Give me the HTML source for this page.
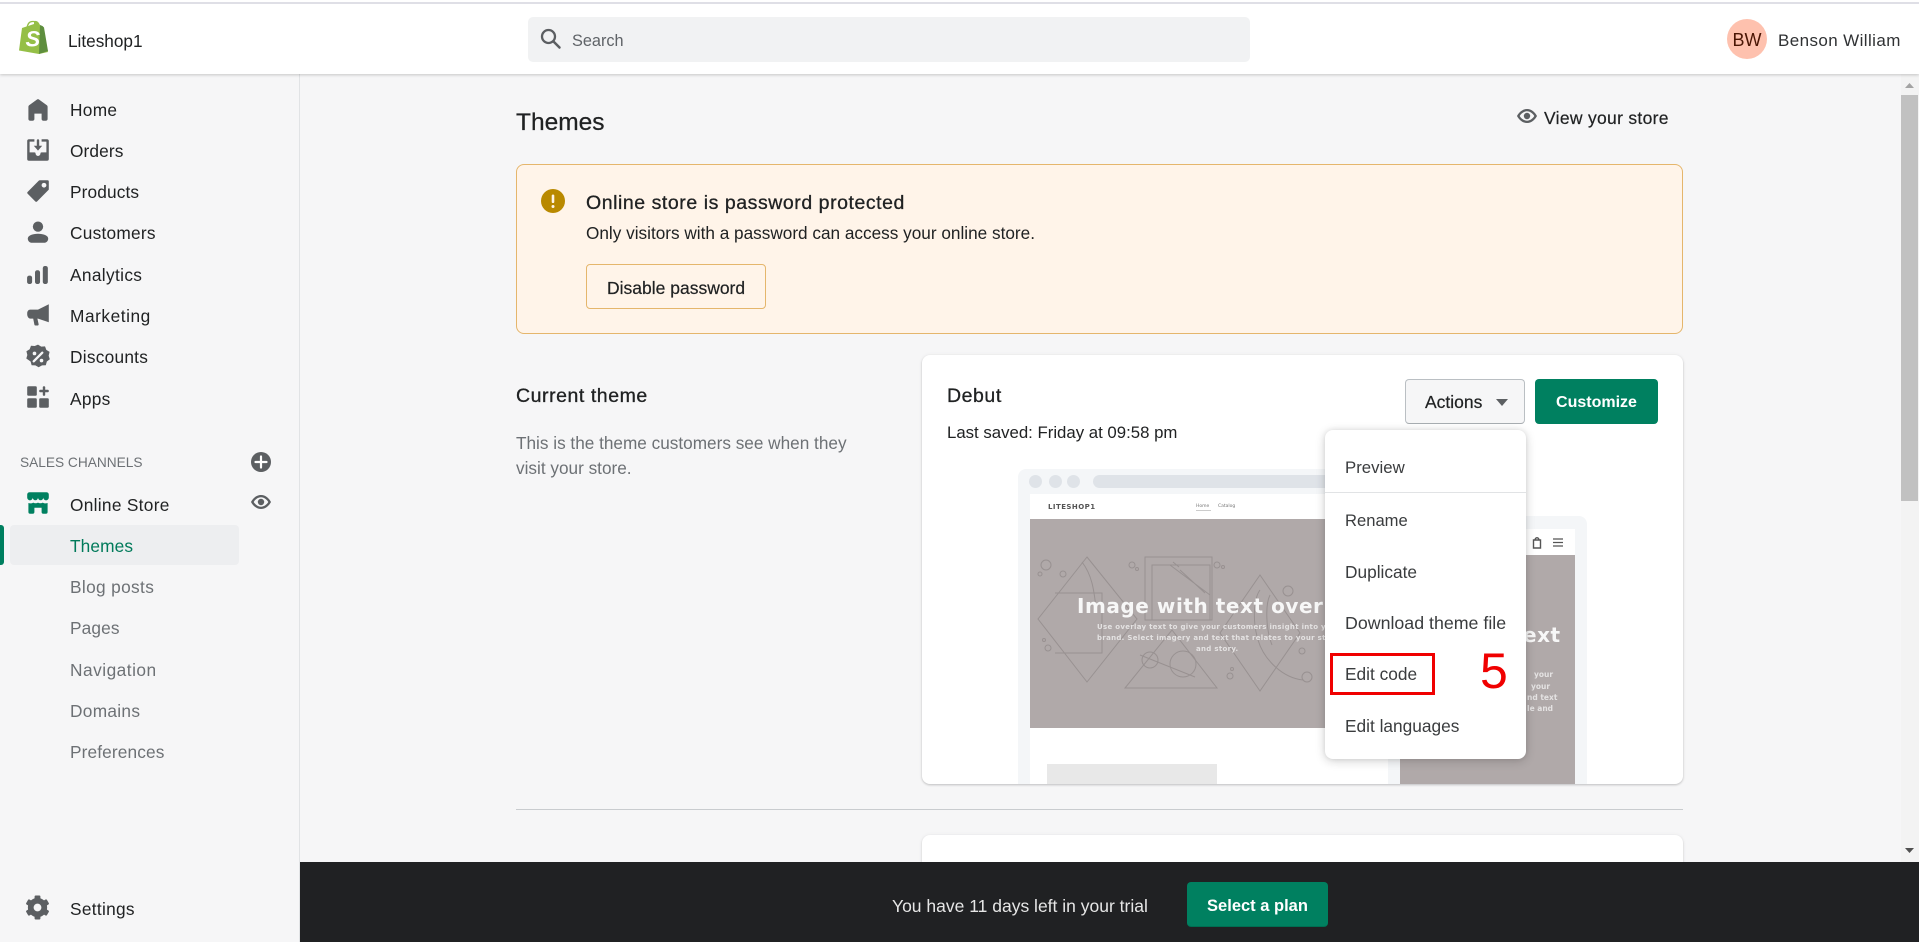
<!DOCTYPE html>
<html><head><meta charset="utf-8"><title>Themes</title>
<style>
*{box-sizing:border-box}
html,body{margin:0;padding:0;width:1919px;height:942px;overflow:hidden;background:#f6f6f7}
body{position:relative;font-family:"Liberation Sans",sans-serif;color:#202223;font-size:17px}
.a{position:absolute}
.t{position:absolute;white-space:nowrap;line-height:20px;transform:translateY(-50%)}
.g{color:#6d7175}
svg{position:absolute;display:block;overflow:visible}
.ic{fill:#5c5f62}
.m{font-size:17.3px;letter-spacing:.12px}
.h{font-size:19.5px;letter-spacing:.55px;-webkit-text-stroke:.3px #202223}
.b{font-size:17.5px;-webkit-text-stroke:.2px #202223}
.d{font-size:17.3px;color:#3a3c3e}
.dv{font-family:"DejaVu Sans",sans-serif;font-weight:700;color:#e4e2e2;line-height:10px}
</style></head><body>

<!-- top bar -->
<div class="a" style="left:0;top:0;width:1919px;height:74px;background:#fff;box-shadow:0 1px 3px rgba(0,0,0,.2);z-index:5">
<div class="a" style="left:0;top:2px;width:1919px;height:2px;background:#dfdfe6"></div>
<svg style="left:19px;top:20px" width="30" height="34" viewBox="0 0 30 34">
<path d="M3 8 L15 4 L15 1 Q19 0 21 5 L22 6 L29 32 L20 34 L0 30.500 Z" fill="#95bf47"/>
<path d="M21 5 L23.500 6 L25 7.500 L29 31 L20 34 Z" fill="#5e8e3e"/>
<path d="M8 8 Q9 1 14 1.500 Q18 1 18.500 8" fill="none" stroke="#95bf47" stroke-width="1.300"/>
<text x="6.500" y="26.500" font-family="Liberation Sans" font-weight="700" font-style="italic" font-size="22" fill="#fff">S</text>
</svg>
<div class="t" style="left:68px;top:41px;font-size:17.2px">Liteshop1</div>
<div class="a" style="left:528px;top:17px;width:722px;height:45px;background:#f1f2f3;border-radius:5px"></div>
<svg style="left:540px;top:28px" width="21" height="21" viewBox="0 0 21 21"><circle cx="8.500" cy="8.500" r="6.500" fill="none" stroke="#5c5f62" stroke-width="2.300"/><path d="M13.500 13.500L19.500 19.500" stroke="#5c5f62" stroke-width="2.500" stroke-linecap="round"/></svg>
<div class="t g" style="left:572px;top:41px;font-size:16.3px;color:#5f6367">Search</div>
<div class="a" style="left:1727px;top:19px;width:40px;height:40px;border-radius:50%;background:#fec1ae;color:#4a1504;font-size:18px;line-height:42px;text-align:center">BW</div>
<div class="t" style="left:1778px;top:41px;font-size:17px;letter-spacing:.4px;color:#303234">Benson William</div>
</div>

<!-- sidebar -->
<div class="a" style="left:299px;top:74px;width:1px;height:868px;background:#e1e3e5"></div>
<svg class="ic" style="left:26px;top:98px" width="24" height="24" viewBox="0 0 20 20"><path d="M18 7.261V17.500c0 .841-.672 1.500-1.500 1.500h-2c-.828 0-1.500-.659-1.500-1.500V13H7v4.477C7 18.318 6.328 19 5.500 19h-2c-.828 0-1.500-.682-1.500-1.523V7.261a1.500 1.500 0 0 1 .615-1.210l6.590-4.820a1.481 1.481 0 0 1 1.590 0l6.590 4.820A1.500 1.500 0 0 1 18 7.260z"/></svg>
<svg class="ic" style="left:25.500px;top:138px" width="24" height="24" viewBox="0 0 20 20"><path d="M2.500 1H7v2H3v9h4a1 1 0 0 1 1 1 2 2 0 0 0 4 0 1 1 0 0 1 1-1h4V3h-4V1h4.500A1.500 1.500 0 0 1 19 2.500v15a1.500 1.500 0 0 1-1.500 1.500h-15A1.500 1.500 0 0 1 1 17.500v-15A1.500 1.500 0 0 1 2.500 1z"/><path d="M10 1a1 1 0 0 1 1 1v4.500h2.500L10 10.500l-3.500-4H9V2a1 1 0 0 1 1-1z"/></svg>
<svg class="ic" style="left:25.500px;top:179px" width="24" height="24" viewBox="0 0 20 20"><path fill-rule="evenodd" d="M18 1h-6.500a1 1 0 0 0-.7.300L1.300 10.800a1 1 0 0 0 0 1.400l6.500 6.500a1 1 0 0 0 1.400 0l9.500-9.500a1 1 0 0 0 .3-.7V2a1 1 0 0 0-1-1zm-3 6.200a2 2 0 1 1 0-4 2 2 0 0 1 0 4z"/></svg>
<svg class="ic" style="left:26px;top:220px" width="24" height="24" viewBox="0 0 20 20"><circle cx="10" cy="5.500" r="4.300"/><path d="M10 11.500c-4.500 0-8.500 1.500-8.500 4 0 2 1.500 3.500 3.500 3.500h10c2 0 3.500-1.500 3.500-3.500 0-2.500-4-4-8.500-4z"/></svg>
<svg class="ic" style="left:26px;top:263px" width="24" height="24" viewBox="0 0 20 20"><rect x=".9" y="10.500" width="4.200" height="7" rx="1.800"/><rect x="7.500" y="6" width="4.200" height="11.500" rx="1.800"/><rect x="14" y="2.500" width="4.200" height="15" rx="1.800"/></svg>
<svg class="ic" style="left:25.500px;top:303px" width="24" height="24" viewBox="0 0 20 20"><path d="M19 1v15L10 13H9.500l1 4.500a1 1 0 0 1-1 1.300H8a1 1 0 0 1-1-.8L6 13H3.500C2 13 1 11 1 9.500V8.500C1 7 2 5.500 3.500 5.500H10L19 1z"/></svg>
<svg style="left:24.500px;top:344px" width="26" height="26" viewBox="0 0 20 20"><path class="ic" d="M10 .5l2.500 1.500 2.900-.2 1 2.700 2.500 1.600-.7 2.900.9 2.700-2.300 1.800-.8 2.800-2.900.1-2.600 1.500-2.500-1.500-2.900-.1-.8-2.800L1 11.200 1.800 8.500 1.100 5.600l2.500-1.600 1-2.700 2.900.2z"/><path d="M6.700 13.300l6.600-6.600" stroke="#f6f6f7" stroke-width="1.800" stroke-linecap="round"/><circle cx="7.300" cy="7.300" r="1.400" fill="#f6f6f7"/><circle cx="12.700" cy="12.700" r="1.400" fill="#f6f6f7"/></svg>
<svg class="ic" style="left:25.500px;top:385px" width="24" height="24" viewBox="0 0 20 20"><rect x="1" y="1" width="8" height="8" rx="1"/><rect x="1" y="11" width="8" height="8" rx="1"/><rect x="11" y="11" width="8" height="8" rx="1"/><rect x="14" y="1" width="2" height="8" rx=".8"/><rect x="11" y="4" width="8" height="2" rx=".8"/></svg>
<div class="t m" style="left:70px;top:110px;letter-spacing:.3px">Home</div>
<div class="t m" style="left:70px;top:151px">Orders</div>
<div class="t m" style="left:70px;top:192px">Products</div>
<div class="t m" style="left:70px;top:233px;letter-spacing:.25px">Customers</div>
<div class="t m" style="left:70px;top:275px;letter-spacing:.35px">Analytics</div>
<div class="t m" style="left:70px;top:316px;letter-spacing:.55px">Marketing</div>
<div class="t m" style="left:70px;top:357px;letter-spacing:.25px">Discounts</div>
<div class="t m" style="left:70px;top:399px;letter-spacing:.3px">Apps</div>
<div class="t" style="left:20px;top:463px;font-size:13.7px;color:#6d7175">SALES CHANNELS</div>
<svg style="left:251px;top:452px" width="20" height="20" viewBox="0 0 20 20"><circle cx="10" cy="10" r="10" fill="#5c5f62"/><path d="M10 4.500v11M4.500 10h11" stroke="#fff" stroke-width="2.200" stroke-linecap="round"/></svg>
<svg style="left:251px;top:492px" width="20" height="20" viewBox="0 0 20 20"><path class="ic" fill-rule="evenodd" d="M10 3C5 3 1.500 7 0 10c1.500 3 5 7 10 7s8.500-4 10-7c-1.500-3-5-7-10-7zm0 2.300c3 0 6 2.400 7.300 4.700-1.300 2.300-4.300 4.700-7.300 4.700S4 12.300 2.700 10C4 7.700 7 5.300 10 5.300z"/><circle cx="10" cy="10" r="3.200" fill="#5c5f62"/></svg>
<svg style="left:25.500px;top:491px" width="24" height="24" viewBox="0 0 20 20" fill="#008060"><path d="M3 1h14a2 2 0 0 1 2 2v2.500a2.300 2.300 0 0 1-4.600 0 2.200 2.200 0 0 1-4.400 0 2.200 2.200 0 0 1-4.400 0 2.300 2.300 0 0 1-4.600 0V3a2 2 0 0 1 2-2z" /><path d="M2 10c1.200.5 2.700.5 4-.300 1.200.7 2.800.7 4 0 1.200.7 2.800.7 4 0 1.300.8 2.800.8 4 .300v7.500a1.500 1.500 0 0 1-1.500 1.500h-2a1.500 1.500 0 0 1-1.500-1.500V14H7v3.500A1.500 1.500 0 0 1 5.500 19h-2A1.500 1.500 0 0 1 2 17.500z"/></svg>
<div class="t m" style="left:70px;top:505px;letter-spacing:.3px">Online Store</div>
<div class="a" style="left:0;top:525px;width:4px;height:40px;background:#008060;border-radius:0 3px 3px 0"></div>
<div class="a" style="left:10px;top:525px;width:229px;height:40px;background:#edeef0;border-radius:4px"></div>
<div class="t m" style="left:70px;top:546px;color:#007a5a">Themes</div>
<div class="t m g" style="left:70px;top:587px;letter-spacing:.35px">Blog posts</div>
<div class="t m g" style="left:70px;top:628px">Pages</div>
<div class="t m g" style="left:70px;top:670px;letter-spacing:.5px">Navigation</div>
<div class="t m g" style="left:70px;top:711px;letter-spacing:.3px">Domains</div>
<div class="t m g" style="left:70px;top:752px">Preferences</div>
<svg style="left:25px;top:895px" width="25" height="25" viewBox="0 0 24 24" fill="#5c5f62"><circle cx="12" cy="12" r="6.500" fill="none" stroke="#5c5f62" stroke-width="5.500"/><rect x="9.200" y=".5" width="5.600" height="5" rx="1"/><rect x="9.200" y=".5" width="5.600" height="5" rx="1" transform="rotate(60 12 12)"/><rect x="9.200" y=".5" width="5.600" height="5" rx="1" transform="rotate(120 12 12)"/><rect x="9.200" y=".5" width="5.600" height="5" rx="1" transform="rotate(180 12 12)"/><rect x="9.200" y=".5" width="5.600" height="5" rx="1" transform="rotate(240 12 12)"/><rect x="9.200" y=".5" width="5.600" height="5" rx="1" transform="rotate(300 12 12)"/></svg>
<div class="t m" style="left:70px;top:909px;letter-spacing:.3px">Settings</div>

<!-- main header -->
<div class="t" style="left:516px;top:122.500px;font-size:24.500px;-webkit-text-stroke:.25px #202223">Themes</div>
<svg style="left:1517px;top:106px" width="20" height="20" viewBox="0 0 20 20"><path class="ic" fill-rule="evenodd" d="M10 3C5 3 1.500 7 0 10c1.500 3 5 7 10 7s8.500-4 10-7c-1.500-3-5-7-10-7zm0 2.300c3 0 6 2.400 7.300 4.700-1.300 2.300-4.300 4.700-7.300 4.700S4 12.300 2.700 10C4 7.700 7 5.300 10 5.300z"/><circle cx="10" cy="10" r="3.200" fill="#5c5f62"/></svg>
<div class="t b" style="left:1544px;top:118px;letter-spacing:.3px">View your store</div>

<!-- banner -->
<div class="a" style="left:516px;top:164px;width:1167px;height:170px;background:#fff4e9;border:1px solid #e5b66c;border-radius:8px"></div>
<svg style="left:541px;top:189px" width="24" height="24" viewBox="0 0 24 24"><circle cx="12" cy="12" r="12" fill="#b98900"/><rect x="10.700" y="5.500" width="2.600" height="8.500" rx="1.300" fill="#fff4e9"/><circle cx="12" cy="17.500" r="1.500" fill="#fff4e9"/></svg>
<div class="t h" style="left:586px;top:203px">Online store is password protected</div>
<div class="t" style="left:586px;top:232.500px;font-size:17.2px">Only visitors with a password can access your online store.</div>
<div class="a" style="left:586px;top:264px;width:180px;height:45px;border:1px solid #e5b66c;border-radius:4px"></div>
<div class="t b" style="left:607px;top:287.500px">Disable password</div>

<!-- current theme -->
<div class="t h" style="left:516px;top:396px">Current theme</div>
<div class="t g" style="left:516px;top:442.500px;font-size:17.2px">This is the theme customers see when they</div>
<div class="t g" style="left:516px;top:467.500px;font-size:17.2px">visit your store.</div>

<!-- card -->
<div class="a" style="left:922px;top:355px;width:761px;height:429px;background:#fff;border-radius:8px;box-shadow:0 0 5px rgba(23,24,24,.05),0 1px 2px rgba(0,0,0,.2);overflow:hidden">
  <div class="a" style="left:96px;top:114px;width:382px;height:320px;background:#f4f6f8;border-radius:8px 8px 0 0"></div>
  <div class="a" style="left:107px;top:120px;width:13px;height:13px;border-radius:50%;background:#dfe3e8"></div>
  <div class="a" style="left:127px;top:120px;width:13px;height:13px;border-radius:50%;background:#dfe3e8"></div>
  <div class="a" style="left:145px;top:120px;width:13px;height:13px;border-radius:50%;background:#dfe3e8"></div>
  <div class="a" style="left:171px;top:120px;width:240px;height:13px;border-radius:7px;background:#dfe3e8"></div>
  <div class="a" style="left:108px;top:139px;width:358px;height:300px;background:#fff"></div>
  <div class="t" style="left:126px;top:152px;font-family:'DejaVu Sans',sans-serif;font-weight:700;font-size:7px;letter-spacing:.45px;color:#555;line-height:10px">LITESHOP1</div>
  <div class="t" style="left:274px;top:152px;font-family:'DejaVu Sans',sans-serif;font-size:4.500px;color:#777;line-height:8px">Home</div>
  <div class="a" style="left:274px;top:155px;width:15px;height:1px;background:#ccc"></div>
  <div class="t" style="left:296px;top:152px;font-family:'DejaVu Sans',sans-serif;font-size:4.500px;color:#777;line-height:8px">Catalog</div>
  <div class="a" style="left:108px;top:164px;width:358px;height:209px;background:#b0a9a9;overflow:hidden">
    <svg style="left:-1030px;top:-519px" width="1400" height="800" viewBox="0 0 1400 800" fill="none" stroke="#989191" stroke-width="1">
      <path d="M1087 557L1137 619 1087 682 1038 619Z M1172 630L1217 688H1125Z M1260 575L1300 633 1260 691 1220 633Z M1145 557h67v63h-67z M1152 565h58v55h-58z M1055 593h47v60h-47"/>
      <circle cx="1046" cy="565" r="5"/><circle cx="1040" cy="574" r="2"/><circle cx="1063" cy="574" r="3"/><circle cx="1132" cy="565" r="3"/><circle cx="1137" cy="569" r="1.500"/><circle cx="1217" cy="565" r="3"/><circle cx="1223" cy="567" r="1.500"/><circle cx="1183" cy="664" r="13"/><circle cx="1150" cy="660" r="8"/><circle cx="1288" cy="591" r="5"/><circle cx="1302" cy="651" r="3"/><circle cx="1307" cy="677" r="5"/><circle cx="1230" cy="676" r="3"/><circle cx="1232" cy="669" r="1.500"/><circle cx="1048" cy="648" r="3"/><circle cx="1044" cy="640" r="1.500"/>
      <path d="M1082 562C1092 575 1094 590 1096 608M1170 565l40 30M1173 562l6 5M1180 570l25 23M1140 655l55 22M1260 590c-6 8-8 30-2 50 6 20 25 38 45 40M1270 595c-5 10-4 35 2 50"/>
    </svg>
  </div>
  <div class="t" style="left:155px;top:251px;font-family:'DejaVu Sans',sans-serif;font-weight:700;font-size:20px;letter-spacing:.55px;color:#f7f7f7">Image with text overlay</div>
  <div class="t dv" style="left:175px;top:272px;font-size:7px;letter-spacing:.3px">Use overlay text to give your customers insight into your</div>
  <div class="t dv" style="left:175px;top:283px;font-size:7px;letter-spacing:.3px">brand. Select imagery and text that relates to your style</div>
  <div class="t dv" style="left:274px;top:294px;font-size:7px;letter-spacing:.3px">and story.</div>
  <div class="a" style="left:125px;top:409px;width:170px;height:22px;background:#e8e8e8"></div>
  <div class="a" style="left:466px;top:161px;width:199px;height:280px;background:#f4f6f8;border-radius:8px 8px 0 0"></div>
  <div class="a" style="left:478px;top:174px;width:175px;height:30px;background:#fff"></div>
  <div class="a" style="left:478px;top:200px;width:175px;height:240px;background:#b0a9a9"></div>
  <svg style="left:610px;top:181px" width="10" height="13" viewBox="0 0 10 13" fill="none" stroke="#555" stroke-width="1.400"><path d="M1.500 4h7v8h-7z M3 4C3 1 7 1 7 4"/></svg>
  <svg style="left:631px;top:183px" width="10" height="9" viewBox="0 0 10 9" stroke="#555" stroke-width="1.300"><path d="M0 1h10M0 4.500h10M0 8h10"/></svg>
  <div class="t" style="left:591px;top:280px;font-family:'DejaVu Sans',sans-serif;font-weight:700;font-size:20px;letter-spacing:.5px;color:#f7f7f7">text</div>
  <div class="t dv" style="left:612px;top:320px;font-size:7.500px">your</div>
  <div class="t dv" style="left:609px;top:332px;font-size:7.500px">your</div>
  <div class="t dv" style="left:605px;top:343px;font-size:7.500px">nd text</div>
  <div class="t dv" style="left:605px;top:354px;font-size:7.500px">le and</div>
</div>
<div class="t h" style="left:947px;top:396px">Debut</div>
<div class="t" style="left:947px;top:433px;font-size:16.8px">Last saved: Friday at 09:58 pm</div>
<div class="a" style="left:1405px;top:379px;width:120px;height:45px;background:#f6f6f7;border:1px solid #babfc3;border-bottom-color:#a8adb1;border-radius:4px"></div>
<div class="t b" style="left:1425px;top:402px">Actions</div>
<svg style="left:1496px;top:399px" width="12" height="7" viewBox="0 0 12 7"><path d="M0 0h12L6 7z" fill="#5c5f62"/></svg>
<div class="a" style="left:1535px;top:379px;width:123px;height:45px;background:#008060;border-radius:4px;color:#fff;font-weight:700;font-size:16px;line-height:48px;text-align:center">Customize</div>

<!-- dropdown -->
<div class="a" style="left:1325px;top:430px;width:201px;height:329px;background:#fff;border-radius:8px;box-shadow:0 0 5px rgba(23,24,24,.08),0 2px 10px rgba(23,24,24,.2)">
<div class="a" style="left:0;top:62px;width:201px;height:1px;background:#e1e3e5"></div>
</div>
<div class="t d" style="left:1345px;top:468px;font-size:16.8px">Preview</div>
<div class="t d" style="left:1345px;top:521px;font-size:16.6px">Rename</div>
<div class="t d" style="left:1345px;top:571.500px">Duplicate</div>
<div class="t d" style="left:1345px;top:622.500px;font-size:17.8px">Download theme file</div>
<div class="t d" style="left:1345px;top:673.500px">Edit code</div>
<div class="t d" style="left:1345px;top:725.500px">Edit languages</div>
<div class="a" style="left:1330px;top:653px;width:105px;height:42px;border:3px solid #f00000"></div>
<div class="t" style="left:1480px;top:671px;font-size:50px;line-height:50px;color:#f00000">5</div>

<!-- lower -->
<div class="a" style="left:516px;top:809px;width:1167px;height:1px;background:#c9cccf"></div>
<div class="a" style="left:922px;top:835px;width:761px;height:40px;background:#fff;border-radius:8px;box-shadow:0 0 5px rgba(23,24,24,.05),0 1px 2px rgba(0,0,0,.15)"></div>

<!-- scrollbar -->
<div class="a" style="left:1901px;top:74px;width:18px;height:788px;background:#f3f3f3"></div>
<div class="a" style="left:1901px;top:95px;width:17px;height:406px;background:#c1c1c1"></div>
<svg style="left:1905px;top:83px" width="9" height="5" viewBox="0 0 9 5"><path d="M0 5L4.500 0 9 5z" fill="#a3a3a3"/></svg>
<svg style="left:1905px;top:848px" width="9" height="5" viewBox="0 0 9 5"><path d="M0 0L4.500 5 9 0z" fill="#505050"/></svg>

<!-- trial bar -->
<div class="a" style="left:300px;top:862px;width:1619px;height:80px;background:#202123"></div>
<div class="t" style="left:892px;top:906px;font-size:17.5px;color:#e6e6e6">You have 11 days left in your trial</div>
<div class="a" style="left:1187px;top:882px;width:141px;height:45px;background:#008060;border-bottom:1px solid #006e52;border-radius:4px;color:#fff;font-weight:700;font-size:16.5px;line-height:49px;text-align:center">Select a plan</div>
</body></html>
